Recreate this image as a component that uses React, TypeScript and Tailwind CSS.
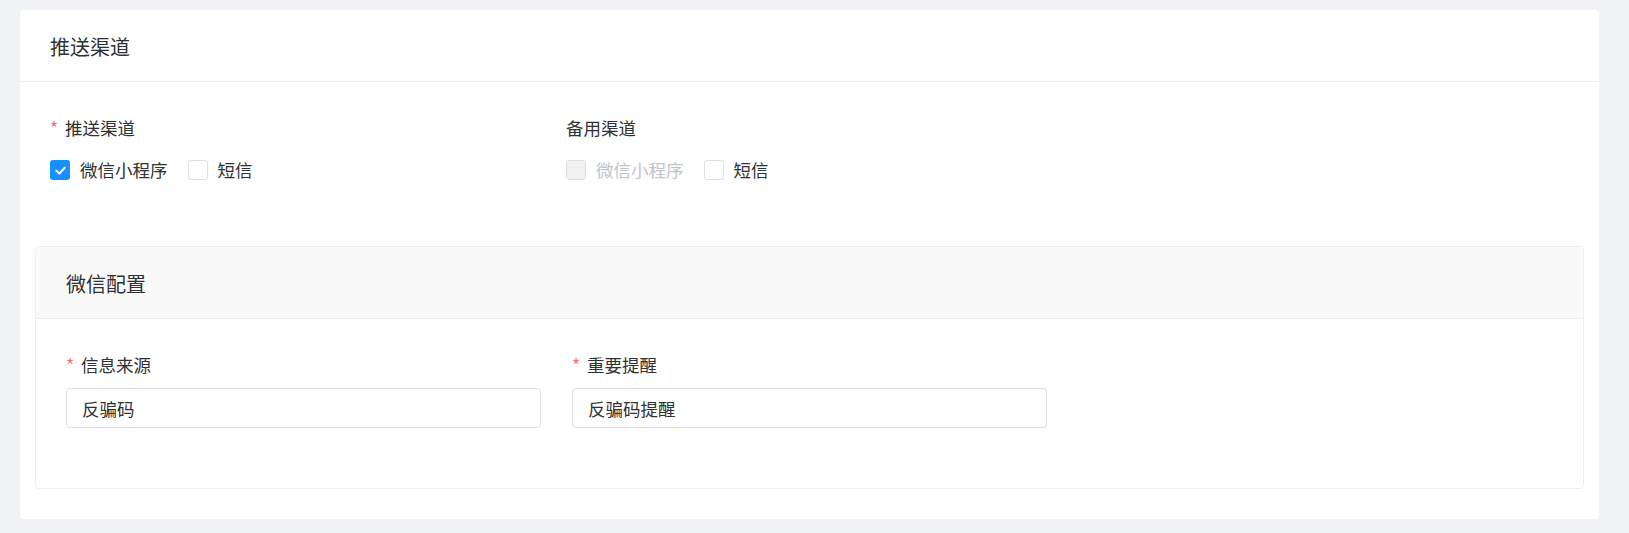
import React from "react";

// Push-channel settings card: primary/backup channel checkboxes plus the WeChat config block.

function Check({ checked = false, disabled = false }: { checked?: boolean; disabled?: boolean }) {
  if (checked) {
    return (
      <span className="flex h-[20px] w-[20px] items-center justify-center rounded-[3px] bg-[#1890ff]">
        <svg viewBox="0 0 12 12" className="h-[13px] w-[13px]" fill="none">
          <path d="M2.2 6.2 4.9 8.8 9.9 3.4" stroke="white" strokeWidth="1.9" strokeLinecap="round" strokeLinejoin="round" />
        </svg>
      </span>
    );
  }
  return (
    <span
      className={
        disabled
          ? "block h-[20px] w-[20px] rounded-[3px] border border-[#dcdfe6] bg-[#f2f2f2]"
          : "block h-[20px] w-[20px] rounded-[3px] border border-[#dcdfe6] bg-white"
      }
    />
  );
}

function Option({ label, checked, disabled }: { label: string; checked?: boolean; disabled?: boolean }) {
  return (
    <label className="mr-[20px] flex items-center">
      <Check checked={checked} disabled={disabled} />
      <span className={disabled ? "ml-[10px] text-[#c0c4cc]" : "ml-[10px] text-[#303133]"}>{label}</span>
    </label>
  );
}

function Label({ text, required }: { text: string; required?: boolean }) {
  return (
    <div className="flex h-[24px] items-center leading-6 text-[#303133]">
      {required && <span className="inline-block w-[15px] text-[#f56c6c]">*</span>}
      {text}
    </div>
  );
}

function Field({ label, value }: { label: string; value: string }) {
  return (
    <div className="w-[506px]">
      <Label text={label} required />
      <input
        readOnly
        value={value}
        className="mt-[11px] h-[40px] w-[475px] rounded-[4px] border border-[#dcdfe6] bg-white px-[15px] text-[17.5px] text-[#303133] outline-none"
      />
    </div>
  );
}

export default function App() {
  return (
    <div className="min-h-screen bg-[#f0f2f5] pb-[14px] pl-[20px] pr-[30px] pt-[10px] font-['Noto_Sans_CJK_SC','Noto_Sans',sans-serif] text-[17.5px] text-[#303133]">
      <div className="rounded-[4px] bg-white">
        <div className="flex h-[72px] items-center border-b border-[#ebeef5] px-[30px] pt-[2px] text-[20px]">
          推送渠道
        </div>

        <div className="px-[15px] pb-[30px]">
          <div className="flex px-[15px] pt-[34px]">
            <div className="w-[516px]">
              <Label text="推送渠道" required />
              <div className="mt-[18px] flex h-[24px] items-center">
                <Option label="微信小程序" checked />
                <Option label="短信" />
              </div>
            </div>
            <div>
              <Label text="备用渠道" />
              <div className="mt-[18px] flex h-[24px] items-center">
                <Option label="微信小程序" disabled />
                <Option label="短信" />
              </div>
            </div>
          </div>

          <div className="mt-[64px] rounded-[4px] border border-[#ebeef5]">
            <div className="flex h-[72px] items-center border-b border-[#ebeef5] bg-[#f9f9f9] px-[30px] pt-[3px] text-[20px]">
              微信配置
            </div>
            <div className="flex px-[30px] pb-[60px] pt-[34px]">
              <Field label="信息来源" value="反骗码" />
              <Field label="重要提醒" value="反骗码提醒" />
            </div>
          </div>
        </div>
      </div>
    </div>
  );
}
